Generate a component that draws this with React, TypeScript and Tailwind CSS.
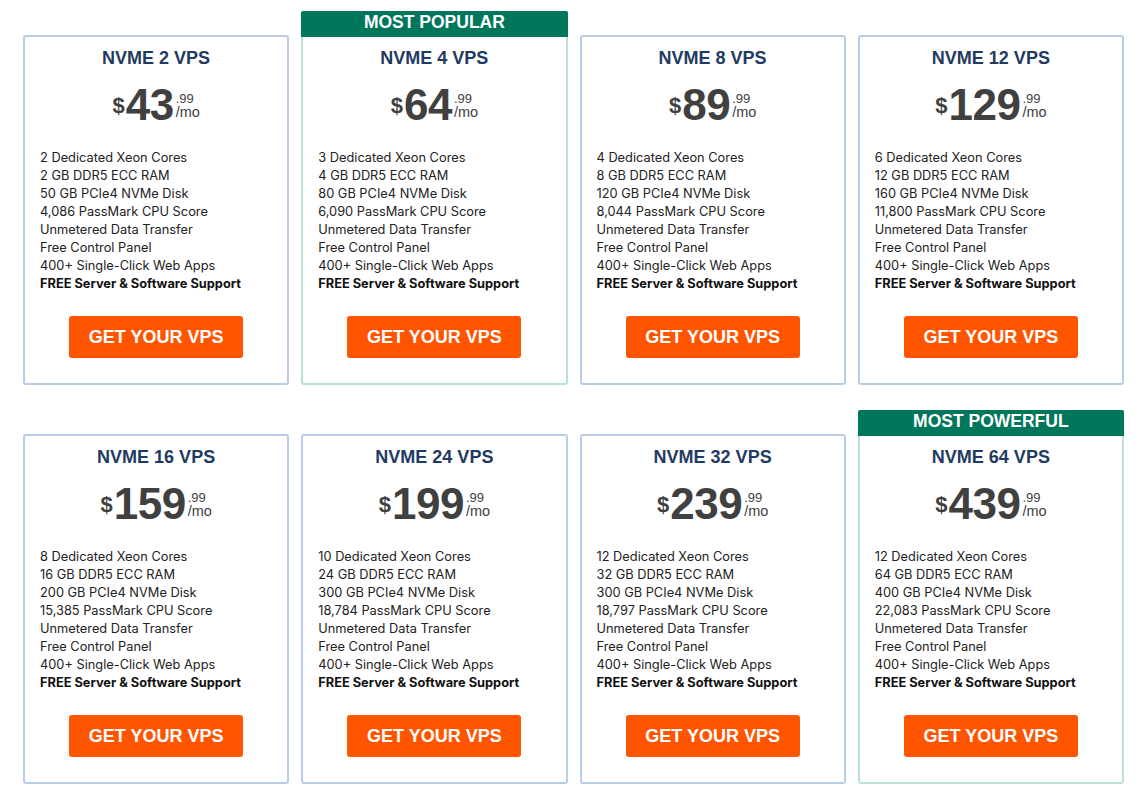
import React from "react";

type Plan = {
  name: string;
  price: string;
  cores: string;
  ram: string;
  disk: string;
  score: string;
  badge?: string;
};

const plans: Plan[] = [
  { name: "NVME 2 VPS", price: "43", cores: "2", ram: "2", disk: "50", score: "4,086" },
  { name: "NVME 4 VPS", price: "64", cores: "3", ram: "4", disk: "80", score: "6,090", badge: "MOST POPULAR" },
  { name: "NVME 8 VPS", price: "89", cores: "4", ram: "8", disk: "120", score: "8,044" },
  { name: "NVME 12 VPS", price: "129", cores: "6", ram: "12", disk: "160", score: "11,800" },
  { name: "NVME 16 VPS", price: "159", cores: "8", ram: "16", disk: "200", score: "15,385" },
  { name: "NVME 24 VPS", price: "199", cores: "10", ram: "24", disk: "300", score: "18,784" },
  { name: "NVME 32 VPS", price: "239", cores: "12", ram: "32", disk: "300", score: "18,797" },
  { name: "NVME 64 VPS", price: "439", cores: "12", ram: "64", disk: "400", score: "22,083", badge: "MOST POWERFUL" },
];

const arial = "font-['Liberation_Sans',Arial,sans-serif]";

function Card({ p }: { p: Plan }) {
  const hasBadge = !!p.badge;
  return (
    <div className={hasBadge ? "flex flex-col" : "flex flex-col pt-[24px]"}>
      <div
        className={
          "flex flex-1 flex-col rounded-[3px] border-2 bg-white " +
          (hasBadge ? "border-[#b8e2d3]" : "border-[#b9cdea]")
        }
      >
        {hasBadge && (
          <div
            className={`-mx-[2px] -mt-[2px] flex h-[26px] items-center justify-center rounded-t-[2px] bg-[#00765b] pb-[2px] text-[17.5px] font-bold leading-none text-white ${arial}`}
          >
            {p.badge}
          </div>
        )}
        <div className={`pt-[9px] text-center text-[18px] font-bold leading-[24px] text-[#1f3b63] ${arial}`}>
          {p.name}
        </div>
        <div className={`mt-[15px] flex h-[40px] items-center justify-center text-[#404040] ${arial}`}>
          <span className="mt-[2px] self-center text-[22px] font-bold leading-none">$</span>
          <span className="ml-[1px] text-[44px] font-bold leading-none tracking-[-0.5px]">{p.price}</span>
          <span className="ml-[2px] flex flex-col items-start pt-[3px]">
            <span className="text-[13px] font-medium leading-[12px]">.99</span>
            <span className="text-[14.5px] leading-[15px]">/mo</span>
          </span>
        </div>
        <ul className="mt-[24px] pl-[15px] font-['Inter',sans-serif] text-[12.8px] leading-[18px] text-[#222]">
          <li>{p.cores} Dedicated Xeon Cores</li>
          <li>{p.ram} GB DDR5 ECC RAM</li>
          <li>{p.disk} GB PCIe4 NVMe Disk</li>
          <li>{p.score} PassMark CPU Score</li>
          <li>Unmetered Data Transfer</li>
          <li>Free Control Panel</li>
          <li>400+ Single-Click Web Apps</li>
          <li className="font-bold text-[#111]">FREE Server &amp; Software Support</li>
        </ul>
        <div className="mt-[23px] mb-[25px] flex justify-center">
          <button
            className={`h-[42px] w-[174px] rounded-[3px] bg-[#ff5500] text-[18px] font-bold text-white ${arial}`}
          >
            GET YOUR VPS
          </button>
        </div>
      </div>
    </div>
  );
}

export default function App() {
  return (
    <div className="min-h-[811px] w-[1145px] bg-white pl-[23px] pr-[21px] pt-[11px]">
      <div className="grid grid-cols-4 gap-x-[12px] gap-y-[25px]">
        {plans.map((p) => (
          <Card key={p.name} p={p} />
        ))}
      </div>
    </div>
  );
}
